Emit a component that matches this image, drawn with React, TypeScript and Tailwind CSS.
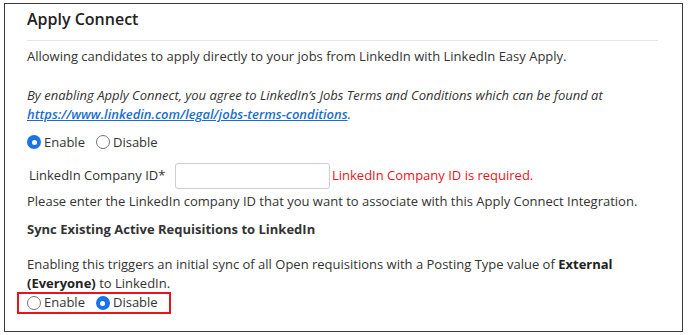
import React from 'react'

const Radio = ({ checked }: { checked: boolean }) =>
  checked ? (
    <span className="inline-flex h-[14px] w-[14px] items-center justify-center rounded-full bg-[#1a73e8]">
      <span className="h-[5px] w-[5px] rounded-full bg-white" />
    </span>
  ) : (
    <span className="inline-block h-[14px] w-[14px] rounded-full border border-[#767676] bg-white" />
  )

const RadioPair = ({ enabled }: { enabled: boolean }) => (
  <div className="flex items-center gap-[11px]">
    <label className="flex items-center gap-[3px]">
      <Radio checked={enabled} />
      <span>Enable</span>
    </label>
    <label className="flex items-center gap-[3px]">
      <Radio checked={!enabled} />
      <span>Disable</span>
    </label>
  </div>
)

export default function App() {
  return (
    <div className="h-[335px] w-[688px] bg-white pl-[4px] pt-[3px] font-['Open_Sans',sans-serif] text-[13px] text-[#333]">
      <div className="h-[329px] w-[679px] border-[1.5px] border-[#3a3a3a] pl-[22px] pr-[24px]">
        <h2 className="pt-[3px] text-[16px] font-semibold leading-[24px] text-[#222]">Apply Connect</h2>
        <div className="mt-[9px] border-t border-[#e5e5e5]" />
        <p className="mt-[5px] leading-[20px]">
          Allowing candidates to apply directly to your jobs from LinkedIn with LinkedIn Easy Apply.
        </p>
        <p className="mt-[20px] italic leading-[19px]">
          By enabling Apply Connect, you agree to LinkedIn’s Jobs Terms and Conditions which can be found at
          <br />
          <a className="font-semibold text-[#1a6fd1] underline">https://www.linkedin.com/legal/jobs-terms-conditions</a>.
        </p>
        <div className="mt-[8px] leading-[20px]">
          <RadioPair enabled={true} />
        </div>
        <div className="mt-[11px] flex items-center pl-[2px]">
          <span className="w-[146px]">LinkedIn Company ID*</span>
          <input className="h-[26px] w-[155px] rounded-[3px] border border-[#cfcfcf] bg-white" />
          <span className="ml-[2px] text-[#e8141c]">LinkedIn Company ID is required.</span>
        </div>
        <p className="mt-[2px] leading-[20px]">
          Please enter the LinkedIn company ID that you want to associate with this Apply Connect Integration.
        </p>
        <p className="mt-[8px] font-bold leading-[20px]">Sync Existing Active Requisitions to LinkedIn</p>
        <p className="mt-[16px] leading-[19px]">
          Enabling this triggers an initial sync of all Open requisitions with a Posting Type value of{' '}
          <b className="text-[#222]">External (Everyone)</b> to LinkedIn.
        </p>
        <div className="-ml-[10px] -mt-[1px] flex h-[22px] w-[154px] items-center border-2 border-[#e8141c] pl-[8px]">
          <RadioPair enabled={false} />
        </div>
      </div>
    </div>
  )
}
